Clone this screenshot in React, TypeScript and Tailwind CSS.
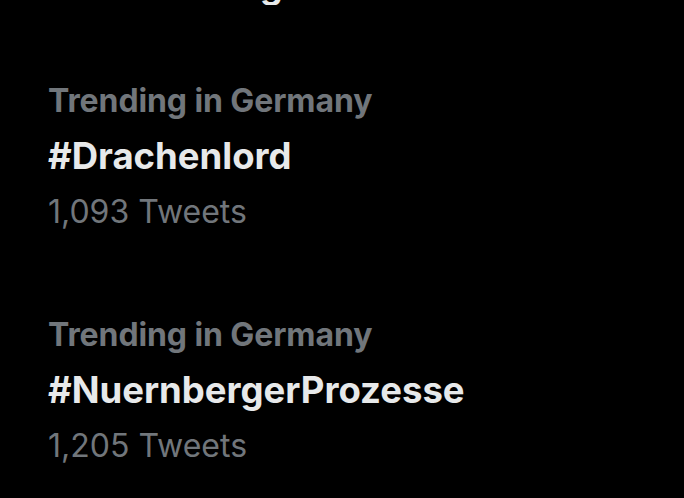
import React from 'react'

const trends = [
  { place: 'Trending in Germany', tag: '#Drachenlord', count: '1,093 Tweets' },
  { place: 'Trending in Germany', tag: '#NuernbergerProzesse', count: '1,205 Tweets' },
]

const App = () => {
  return (
    <div className="w-[684px] h-[498px] overflow-hidden bg-black" style={{ fontFamily: 'Inter, "Noto Sans", sans-serif' }}>
      {/* bit of the previous row that is cut off at the top */}
      <div className="h-[5px] overflow-hidden pl-[260px]">
        <div className="-mt-[35px] text-[36px] leading-[40px] font-bold text-[#e7e9ea]">g</div>
      </div>
      <div className="pl-[48px] pt-[34px]">
        {trends.map((t) => (
          <div key={t.tag} className="py-[34px]">
            <div className="h-[56px] flex items-center text-[32px] font-bold text-[#71767b] tracking-[-0.1px]">{t.place}</div>
            <div className="h-[55px] flex items-center text-[36.5px] font-bold text-[#e7e9ea] tracking-[0px]">{t.tag}</div>
            <div className="h-[55px] flex items-center text-[32px] text-[#71767b]">{t.count}</div>
          </div>
        ))}
      </div>
    </div>
  )
}

export default App
